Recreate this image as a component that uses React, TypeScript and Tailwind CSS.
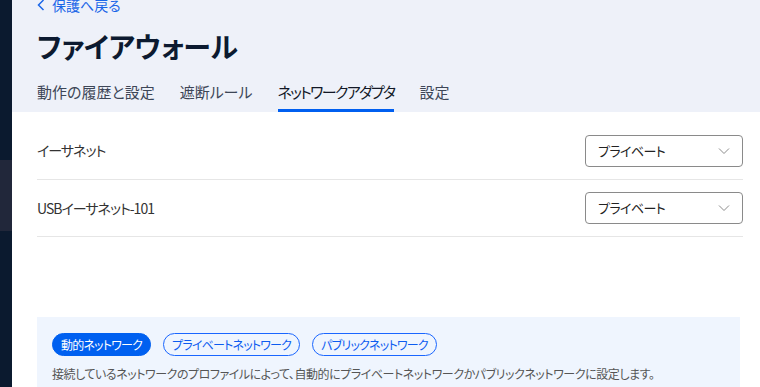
import React from "react";

const font = { fontFamily: '"Noto Sans CJK JP", "Noto Sans", sans-serif' };

function Chevron() {
  return (
    <svg width="12" height="8" viewBox="0 0 12 8" fill="none">
      <path d="M1 1.5 L6 6.5 L11 1.5" stroke="#8c8c8c" strokeWidth="1" />
    </svg>
  );
}

function Select() {
  return (
    <div className="w-[158px] h-[32px] border border-[#8a8a8a] rounded-[4px] flex items-center justify-between pl-[12px] pr-[12px] bg-white">
      <span className="text-[13px] text-[#222] tracking-[-0.6px]">プライベート</span>
      <Chevron />
    </div>
  );
}

export default function App() {
  return (
    <div className="w-[760px] h-[387px] flex overflow-hidden bg-white" style={font}>
      <div className="w-[12px] shrink-0 bg-[#0b1a2f] flex flex-col">
        <div className="h-[160px]" />
        <div className="h-[71px] bg-[#21273a]" />
      </div>
      <div className="flex-1 flex flex-col">
        <div className="bg-[#eef1f9] pl-[25px] h-[112px] flex flex-col [font-feature-settings:'palt']">
          <div className="flex items-center gap-[7px] mt-[-4px] h-[18px] text-[#1a66e8] text-[14px] leading-[18px]">
            <svg width="8" height="12" viewBox="0 0 8 12" fill="none">
              <path d="M6.5 1 L1.5 6 L6.5 11" stroke="#1a66e8" strokeWidth="1.5" />
            </svg>
            <span>保護へ戻る</span>
          </div>
          <div className="mt-[13px] text-[28px] leading-[38px] font-bold text-[#0c1a30] tracking-[-0.3px]">
            ファイアウォール
          </div>
          <div className="mt-[14px] flex gap-[25px] text-[15px] leading-[26px]">
            <div className="text-[#3d4657] h-[33px]">動作の履歴と設定</div>
            <div className="text-[#3d4657] h-[33px]">遮断ルール</div>
            <div className="text-[#121826] h-[33px] border-b-[3px] border-[#005ff0] tracking-[-1.7px]">ネットワークアダプタ</div>
            <div className="text-[#3d4657] h-[33px]">設定</div>
          </div>
        </div>
        <div className="pl-[25px] pr-[17px] [font-feature-settings:'palt']">
          <div className="flex items-center justify-between h-[68px] border-b border-[#e6e6e6] pt-[10px]">
            <span className="text-[14px] text-[#333] tracking-[-1px]">イーサネット</span>
            <Select />
          </div>
          <div className="flex items-center justify-between h-[57px] border-b border-[#e6e6e6]">
            <span className="text-[14px] text-[#333] tracking-[-1px]">USBイーサネット-101</span>
            <Select />
          </div>
        </div>
        <div className="ml-[25px] mr-[20px] mt-[80px] bg-[#eff5fe] pl-[15px] pt-[16px] flex-1 [font-feature-settings:'palt']">
          <div className="flex gap-[12px] tracking-[-0.8px]">
            <span className="h-[23px] px-[8px] rounded-full bg-[#0060f0] border border-[#0060f0] text-white text-[12px] leading-[21px]">動的ネットワーク</span>
            <span className="h-[23px] px-[8px] rounded-full border border-[#1a66ff] text-[#0d5cf0] text-[12px] leading-[21px]">プライベートネットワーク</span>
            <span className="h-[23px] px-[8px] rounded-full border border-[#1a66ff] text-[#0d5cf0] text-[12px] leading-[21px]">パブリックネットワーク</span>
          </div>
          <div className="mt-[9px] text-[12px] text-[#555] leading-[18px] tracking-[-0.45px]">
            接続しているネットワークのプロファイルによって、自動的にプライベートネットワークかパブリックネットワークに設定します。
          </div>
        </div>
      </div>
    </div>
  );
}
